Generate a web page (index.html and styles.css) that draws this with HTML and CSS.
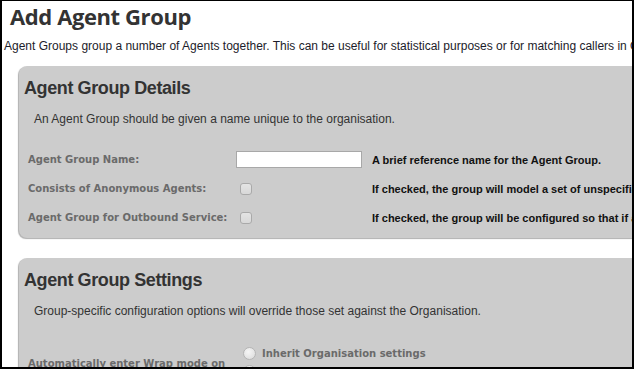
FILE: index.html
```html
<!DOCTYPE html>
<html>
<head>
<meta charset="utf-8">
<title>Add Agent Group</title>
<link rel="stylesheet" href="styles.css">
</head>
<body>
<div class="frame">
  <div class="page">
    <h1 class="title">Add Agent Group</h1>
    <p class="intro">Agent Groups group a number of Agents together. This can be useful for statistical purposes or for matching callers in Queues to Agents with appropriate skills.</p>

    <section class="panel">
      <h2 class="panel-title">Agent Group Details</h2>
      <p class="panel-desc">An Agent Group should be given a name unique to the organisation.</p>
      <table class="form">
        <tr>
          <td class="label">Agent Group Name:</td>
          <td class="control"><input class="text-input" type="text"></td>
          <td class="help">A brief reference name for the Agent Group.</td>
        </tr>
        <tr>
          <td class="label">Consists of Anonymous Agents:</td>
          <td class="control"><input class="check" type="checkbox"></td>
          <td class="help">If checked, the group will model a set of unspecified agents rather than named agents.</td>
        </tr>
        <tr>
          <td class="label">Agent Group for Outbound Service:</td>
          <td class="control"><input class="check" type="checkbox"></td>
          <td class="help">If checked, the group will be configured so that if an agent is busy on an outbound call they are unavailable.</td>
        </tr>
      </table>
    </section>

    <section class="panel">
      <h2 class="panel-title">Agent Group Settings</h2>
      <p class="panel-desc">Group-specific configuration options will override those set against the Organisation.</p>
      <table class="form form-settings">
        <tr>
          <td class="label label-mid">Automatically enter Wrap mode on call completion:</td>
          <td class="control control-wide">
            <label class="radio-row"><input class="radio" type="radio" name="wrap"><span>Inherit Organisation settings</span></label>
            <label class="radio-row"><input class="radio" type="radio" name="wrap"><span>Yes</span></label>
            <label class="radio-row"><input class="radio" type="radio" name="wrap"><span>No</span></label>
          </td>
          <td class="help help-mid">Set whether the agent is put into wrap mode automatically.</td>
        </tr>
      </table>
    </section>
  </div>
</div>
</body>
</html>
```

FILE: styles.css
```css
html, body {
  margin: 0;
  padding: 0;
  background: #fff;
}

.frame {
  width: 634px;
  height: 369px;
  box-sizing: border-box;
  border: 2px solid #000;
  border-top-width: 1px;
  overflow: hidden;
  background: #fff;
}

.page {
  width: 1100px;
}

.title {
  margin: 0;
  padding-left: 8px;
  font-family: "Open Sans", "Liberation Sans", sans-serif;
  font-weight: 700;
  font-size: 22px;
  line-height: 30px;
  letter-spacing: -0.4px;
  color: #333;
}

.intro {
  margin: 7px 0 0;
  padding-left: 2px;
  font-family: "Liberation Sans", Arial, sans-serif;
  font-size: 12px;
  line-height: 16px;
  color: #1c1c2a;
  white-space: nowrap;
}

.panel {
  margin: 12px 0 0 17px;
  padding: 11px 0 6px 5px;
  background: #ccc;
  border-radius: 8px 0 0 8px;
  box-shadow: -1px 1px 1px #b0b0b0;
}

.panel + .panel {
  margin-top: 20px;
}

.panel-title {
  margin: 0;
  font-family: "Liberation Sans", Arial, sans-serif;
  font-weight: 700;
  font-size: 18px;
  line-height: 22px;
  letter-spacing: -0.4px;
  color: #333;
}

.panel-desc {
  margin: 12px 0 0 10px;
  font-family: "Liberation Sans", Arial, sans-serif;
  font-size: 12px;
  line-height: 16px;
  color: #333;
  white-space: nowrap;
}

.form {
  margin-top: 18px;
  border-collapse: collapse;
}

.form td {
  padding: 0;
  height: 29px;
  vertical-align: middle;
}

.label {
  width: 208px;
  padding-left: 4px !important;
  font-family: "DejaVu Sans", Verdana, sans-serif;
  font-weight: 700;
  font-size: 10px;
  color: #6a6a6a;
  white-space: nowrap;
}

.control {
  width: 136px;
}

.help {
  font-family: "Liberation Sans", Arial, sans-serif;
  font-weight: 700;
  font-size: 11px;
  color: #111;
  white-space: nowrap;
}

.text-input {
  display: block;
  box-sizing: border-box;
  width: 126px;
  height: 17px;
  margin: 0;
  border: 1px solid #a8a8a8;
  background: #fff;
  padding: 0 3px;
}

.check {
  -webkit-appearance: none;
  appearance: none;
  display: block;
  box-sizing: border-box;
  width: 12px;
  height: 12px;
  margin: 0 0 0 4px;
  border: 1px solid #a9a9a9;
  border-radius: 3px;
  background: linear-gradient(#e4e4e4, #d8d8d8);
}

.form-settings {
  margin-top: 25px;
}

.label-mid {
  white-space: normal;
  width: 200px;
  padding-right: 8px !important;
  line-height: 14px;
}

.control-wide {
  width: 229px;
}

.radio-row {
  display: flex;
  align-items: center;
  gap: 6px;
  height: 18px;
  font-family: "DejaVu Sans", Verdana, sans-serif;
  font-weight: 700;
  font-size: 10px;
  color: #6a6a6a;
}

.radio {
  -webkit-appearance: none;
  appearance: none;
  box-sizing: border-box;
  width: 13px;
  height: 13px;
  margin: 0 0 0 7px;
  border: 1px solid #b4b4b4;
  border-radius: 50%;
  background: radial-gradient(circle at 40% 35%, #f6f6f6, #d9d9d9);
}

.help-mid {
  vertical-align: middle;
}
```
